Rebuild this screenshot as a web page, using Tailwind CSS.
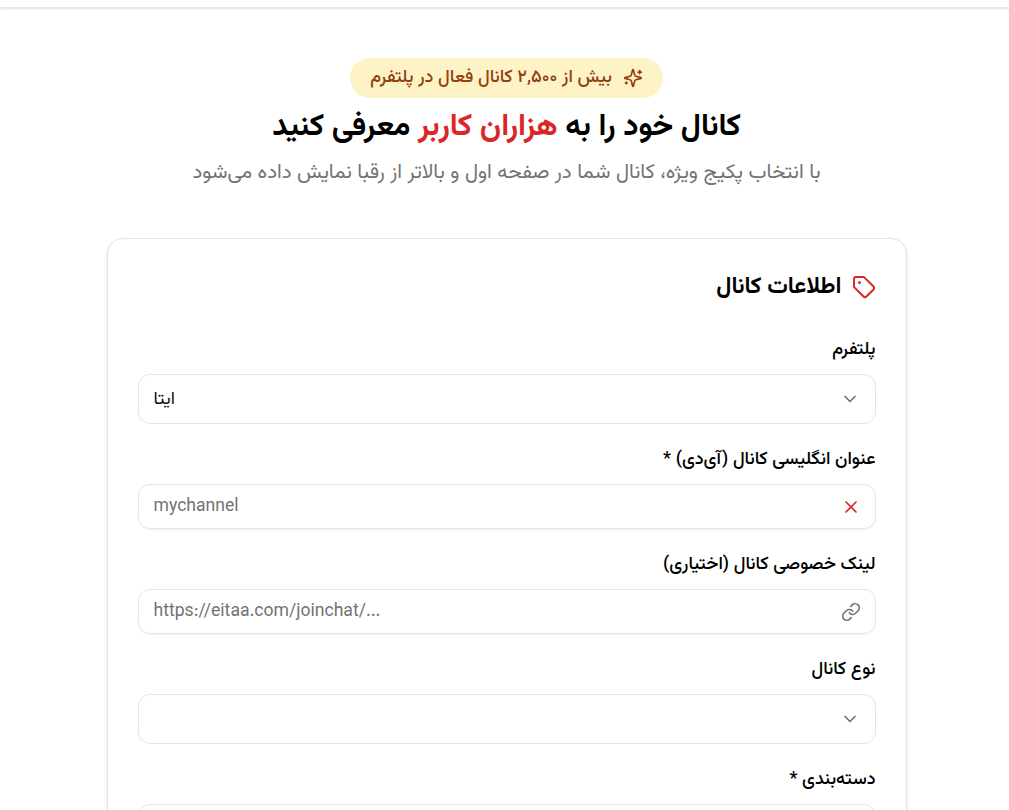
<!DOCTYPE html>
<html lang="fa">
<head>
<meta charset="utf-8">
<script src="https://cdn.jsdelivr.net/npm/@tailwindcss/browser@4"></script>
</head>
<body class="bg-white overflow-hidden h-[810px] font-['Vazirmatn','Roboto',sans-serif]">
<div class="w-[1013px] h-[810px] overflow-hidden">
<div dir="rtl" class="h-full">
  <div class="h-2 bg-white border-b border-gray-200 shadow-sm"></div>
  <div class="flex flex-col items-center pt-[50px]">
    <div class="h-10 w-[313px] rounded-full bg-[#fef3c7] flex items-center justify-center gap-[11px] text-[#92400e] text-[18px] font-medium">
      <svg class="w-5 h-5" viewBox="0 0 24 24" fill="none" stroke="currentColor" stroke-width="2" stroke-linecap="round" stroke-linejoin="round"><path d="M9.937 15.5A2 2 0 0 0 8.5 14.063l-6.135-1.582a.5.5 0 0 1 0-.962L8.5 9.936A2 2 0 0 0 9.937 8.5l1.582-6.135a.5.5 0 0 1 .963 0L14.063 8.5A2 2 0 0 0 15.5 9.937l6.135 1.581a.5.5 0 0 1 0 .964L15.5 14.063a2 2 0 0 0-1.437 1.437l-1.582 6.135a.5.5 0 0 1-.963 0z"/><path d="M20 3v4"/><path d="M22 5h-4"/><path d="M4 17v2"/><path d="M5 18H3"/></svg>
      <span>بیش از ۲,۵۰۰ کانال فعال در پلتفرم</span>
    </div>
    <h1 class="mt-3 text-[30.6px] font-bold leading-9 text-black">کانال خود را به <span class="text-[#dc2626]">هزاران کاربر</span> معرفی کنید</h1>
    <p class="mt-[13px] text-[20.5px] leading-7 text-[#737373]">با انتخاب پکیج ویژه، کانال شما در صفحه اول و بالاتر از رقبا نمایش داده می‌شود</p>
    <div class="mt-[51px] w-[800px] rounded-2xl border border-[#e5e5e5] bg-white shadow-sm px-[30px] pt-[34px]">
      <div class="flex items-center gap-2.5 mb-[35px]">
        <svg class="w-6 h-6 text-[#dc2626]" viewBox="0 0 24 24" fill="none" stroke="currentColor" stroke-width="2" stroke-linecap="round" stroke-linejoin="round"><path d="M12.586 2.586A2 2 0 0 0 11.172 2H4a2 2 0 0 0-2 2v7.172a2 2 0 0 0 .586 1.414l8.704 8.704a2.426 2.426 0 0 0 3.42 0l6.58-6.58a2.426 2.426 0 0 0 0-3.42z"/><circle cx="7.5" cy="7.5" r=".5" fill="currentColor"/></svg>
        <h2 class="text-[23px] font-bold leading-7 text-black">اطلاعات کانال</h2>
      </div>
      <div class="flex flex-col gap-[22px]">
        <div>
          <label class="block pt-px text-[18px] font-medium leading-[26px] text-black mb-[11px]">پلتفرم</label>
          <div class="h-[50px] rounded-xl border border-[#e5e5e5] flex items-center justify-between px-[15px] text-[18px] text-[#0a0a0a]">
            <svg class="w-5 h-5 text-[#737373]" viewBox="0 0 24 24" fill="none" stroke="currentColor" stroke-width="2" stroke-linecap="round" stroke-linejoin="round"><path d="m6 9 6 6 6-6"/></svg>
            <span class="pt-0.5">ایتا</span>
          </div>
        </div>
        <div>
          <label class="block pt-px text-[18px] font-medium leading-[26px] text-black mb-[11px]">عنوان انگلیسی کانال (آی‌دی) *</label>
          <div class="h-[45px] rounded-xl border border-[#e5e5e5] shadow-xs flex items-center justify-between pr-[14px] pl-[15px] text-[17.6px] text-[#737373]">
            <svg class="w-5 h-5 text-[#dc2626]" viewBox="0 0 24 24" fill="none" stroke="currentColor" stroke-width="2" stroke-linecap="round" stroke-linejoin="round"><path d="M18 6 6 18"/><path d="m6 6 12 12"/></svg>
            <span dir="ltr" class="pt-0.5">mychannel</span>
          </div>
        </div>
        <div>
          <label class="block pt-px text-[18px] font-medium leading-[26px] text-black mb-[11px]">لینک خصوصی کانال (اختیاری)</label>
          <div class="h-[45px] rounded-xl border border-[#e5e5e5] shadow-xs flex items-center justify-between pr-[14px] pl-[15px] text-[17.6px] text-[#737373]">
            <svg class="w-5 h-5 text-[#737373]" viewBox="0 0 24 24" fill="none" stroke="currentColor" stroke-width="2" stroke-linecap="round" stroke-linejoin="round"><path d="M10 13a5 5 0 0 0 7.54.54l3-3a5 5 0 0 0-7.07-7.07l-1.72 1.71"/><path d="M14 11a5 5 0 0 0-7.54-.54l-3 3a5 5 0 0 0 7.07 7.07l1.71-1.71"/></svg>
            <span dir="ltr" class="pt-0.5">https://eitaa.com/joinchat/...</span>
          </div>
        </div>
        <div>
          <label class="block pt-px text-[18px] font-medium leading-[26px] text-black mb-[11px]">نوع کانال</label>
          <div class="h-[50px] rounded-xl border border-[#e5e5e5] flex items-center px-[15px]">
            <svg class="w-5 h-5 text-[#737373]" viewBox="0 0 24 24" fill="none" stroke="currentColor" stroke-width="2" stroke-linecap="round" stroke-linejoin="round"><path d="m6 9 6 6 6-6"/></svg>
          </div>
        </div>
        <div>
          <label class="block pt-px text-[18px] font-medium leading-[26px] text-black mb-[11px]">دسته‌بندی *</label>
          <div class="h-[50px] rounded-xl border border-[#e5e5e5]"></div>
        </div>
      </div>
    </div>
  </div>
</div>
</div>
</body>
</html>
